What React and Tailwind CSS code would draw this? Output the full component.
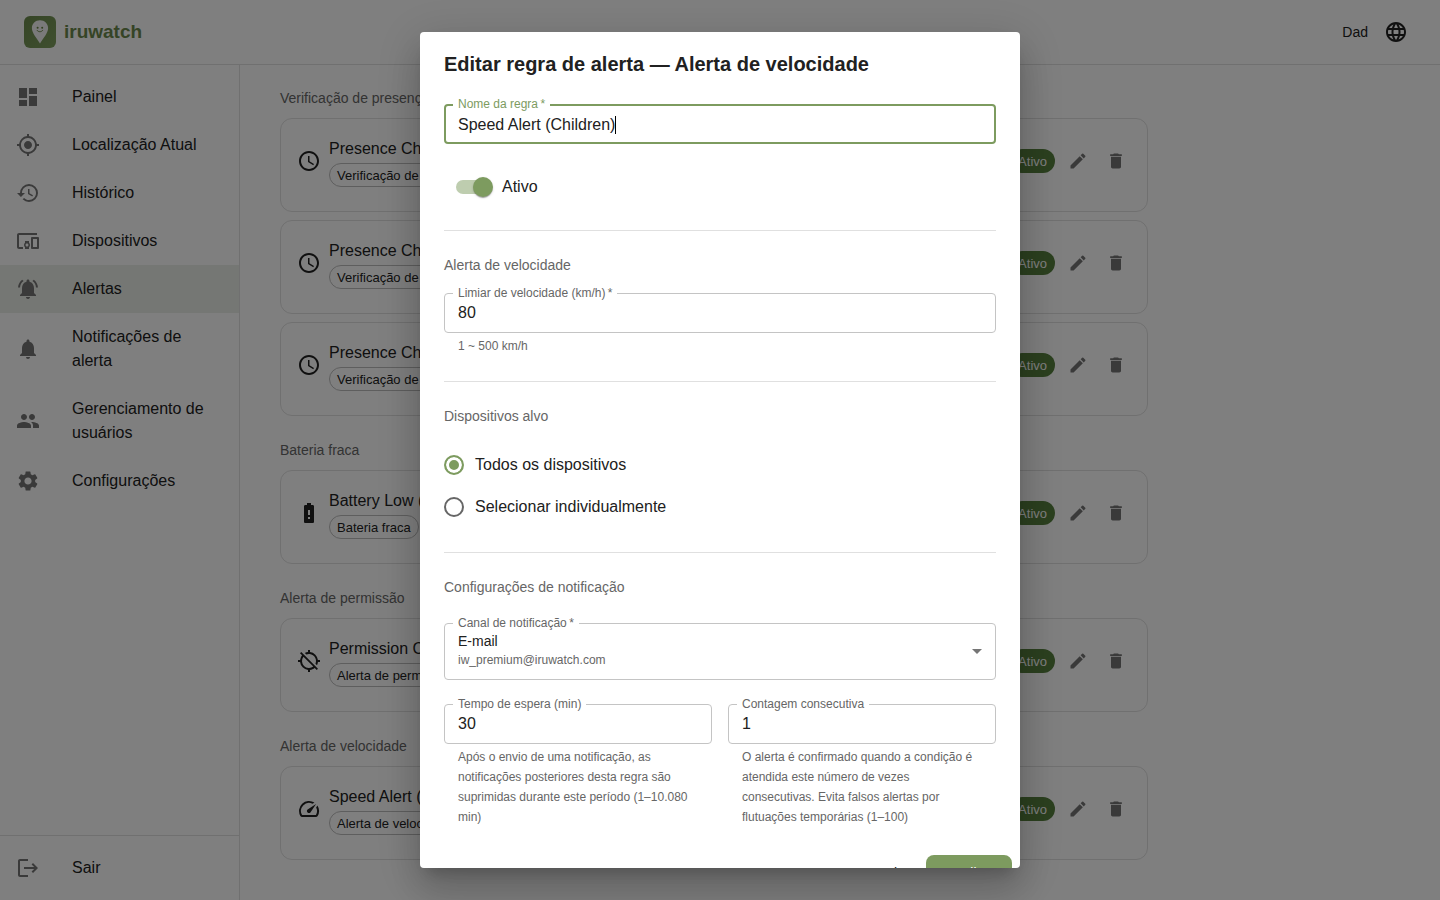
import { useState } from "react";
import {
	MdAccessTime,
	MdArrowDropDown,
	MdBatteryAlert,
	MdDashboard,
	MdDelete,
	MdDevicesOther,
	MdEdit,
	MdHistory,
	MdLanguage,
	MdLocationDisabled,
	MdLogout,
	MdMyLocation,
	MdNotifications,
	MdNotificationsActive,
	MdPeople,
	MdSettings,
	MdSpeed,
} from "react-icons/md";

const navItems = [
	{ label: "Painel", icon: MdDashboard },
	{ label: "Localização Atual", icon: MdMyLocation },
	{ label: "Histórico", icon: MdHistory },
	{ label: "Dispositivos", icon: MdDevicesOther },
	{ label: "Alertas", icon: MdNotificationsActive, active: true },
	{ label: "Notificações de alerta", icon: MdNotifications },
	{ label: "Gerenciamento de usuários", icon: MdPeople },
	{ label: "Configurações", icon: MdSettings },
];

const ruleGroups = [
	{
		title: "Verificação de presença",
		icon: MdAccessTime,
		rules: ["Presence Check (Children)", "Presence Check (Parents)", "Presence Check (Family)"],
	},
	{ title: "Bateria fraca", icon: MdBatteryAlert, rules: ["Battery Low (Children)"] },
	{ title: "Alerta de permissão", icon: MdLocationDisabled, rules: ["Permission Change"] },
	{ title: "Alerta de velocidade", icon: MdSpeed, rules: ["Speed Alert (Children)"] },
];

function Logo() {
	return (
		<a href="#" className="flex items-center gap-2">
			<svg width="32" height="32" viewBox="0 0 32 32" aria-hidden="true">
				<defs>
					<linearGradient id="logo-bg" x1="0" y1="0" x2="1" y2="1">
						<stop offset="0" stopColor="#6b8a4c" />
						<stop offset="1" stopColor="#7f9f5f" />
					</linearGradient>
				</defs>
				<rect width="32" height="32" rx="6" fill="url(#logo-bg)" />
				<path d="M16 4.2c-4.6 0-8.1 3.4-8.1 7.9 0 5.2 4.9 10.2 8.1 15.3 3.2-5.1 8.1-10.1 8.1-15.3 0-4.5-3.5-7.9-8.1-7.9z" fill="#f5f5f5" />
				<circle cx="13.6" cy="11.7" r="1" fill="#64803f" />
				<circle cx="18.2" cy="11.7" r="1" fill="#64803f" />
				<path d="M13 14.3c1.4 2 4.4 2 5.8 0" fill="none" stroke="#64803f" strokeWidth="0.9" strokeLinecap="round" />
			</svg>
			<span className="text-[19px] font-bold text-[#6b884c]">iruwatch</span>
		</a>
	);
}

function NavItem({ label, icon: Icon, active }) {
	return (
		<a
			href="#"
			aria-current={active ? "page" : undefined}
			className={`flex items-center gap-8 px-4 py-3 ${active ? "bg-[#ebeee8]" : ""}`}
		>
			<Icon size={24} className="shrink-0 text-[#757575]" />
			<span>{label}</span>
		</a>
	);
}

function RuleCard({ name, type, icon: Icon }) {
	return (
		<li className="flex items-center gap-2 rounded-xl border border-[#e0e0e0] px-4 pt-4 pb-6">
			<Icon size={24} className="shrink-0" />
			<div className="flex flex-1 flex-col items-start">
				<span className="leading-7">{name}</span>
				<span className="flex h-6 items-center rounded-full border border-[#bdbdbd] px-[7px] pt-0.5 text-[13px]">{type}</span>
			</div>
			<span className="flex h-6 items-center rounded-full bg-[#57803e] px-2 pt-0.5 text-[13px] text-white">Ativo</span>
			<button type="button" aria-label="Editar" className="p-[5px] text-[#757575]">
				<MdEdit size={20} />
			</button>
			<button type="button" aria-label="Excluir" className="p-[5px] text-[#757575]">
				<MdDelete size={20} />
			</button>
		</li>
	);
}

function FieldLabel({ id, required, focused, children }) {
	return (
		<label
			htmlFor={id}
			className={`absolute -top-2 left-[9px] bg-white px-[5px] text-xs leading-4 ${focused ? "text-[#7d9b5f]" : "text-[#666666]"}`}
		>
			{children}
			{required && <span aria-hidden="true">&thinsp;*</span>}
		</label>
	);
}

function TextField({ id, label, value, onChange, required, focused, helper }) {
	return (
		<div>
			<div className="relative">
				<input
					id={id}
					value={value}
					onChange={(e) => onChange(e.target.value)}
					required={required}
					aria-describedby={helper ? `${id}-helper` : undefined}
					className={`block h-10 w-full rounded outline-none ${
						focused ? "border-2 border-[#7d9b5f] px-3 pt-0.5" : "border border-[#c4c4c4] px-[13px]"
					}`}
				/>
				<FieldLabel id={id} required={required} focused={focused}>
					{label}
				</FieldLabel>
				{focused && <span className="absolute top-3 left-[171px] h-[18px] w-px bg-black" />}
			</div>
			{helper && (
				<p id={`${id}-helper`} className="mx-[14px] mt-[3px] mb-px text-xs leading-5 text-[#666666]">
					{helper}
				</p>
			)}
		</div>
	);
}

function Radio({ label, checked, onChange }) {
	return (
		<label className="flex h-[42px] items-center gap-[11px]">
			<input
				type="radio"
				name="target"
				checked={checked}
				onChange={onChange}
				className="size-5 appearance-none rounded-full border-2 border-[#666666] checked:border-[#7d9b5f] checked:bg-[#7d9b5f] checked:shadow-[inset_0_0_0_3px_#ffffff]"
			/>
			{label}
		</label>
	);
}

function SectionTitle({ children }) {
	return <h3 className="pb-0.5 text-sm leading-5 text-[#666666]">{children}</h3>;
}

function EditRuleDialog() {
	const [name, setName] = useState("Speed Alert (Children)");
	const [enabled, setEnabled] = useState(true);
	const [limit, setLimit] = useState("80");
	const [target, setTarget] = useState("all");
	const [cooldown, setCooldown] = useState("30");
	const [count, setCount] = useState("1");

	return (
		<div className="fixed inset-0 flex items-center justify-center bg-black/50 p-8">
			<form
				role="dialog"
				aria-modal="true"
				aria-labelledby="dialog-title"
				onSubmit={(e) => e.preventDefault()}
				className="max-h-full w-full max-w-[600px] overflow-y-auto rounded bg-white shadow-[0_11px_15px_-7px_rgba(0,0,0,0.2),0_24px_38px_3px_rgba(0,0,0,0.14),0_9px_46px_8px_rgba(0,0,0,0.12)] [scrollbar-width:none]"
			>
				<h2 id="dialog-title" className="px-6 py-4 text-xl leading-8 font-bold">
					Editar regra de alerta — Alerta de velocidade
				</h2>

				<div className="flex flex-col gap-6 px-6 pt-2 pb-[19px]">
					<TextField id="name" label="Nome da regra" value={name} onChange={setName} required focused />

					<label className="flex h-[38px] items-center self-start">
						<span className="relative mx-3 flex h-5 w-[34px] items-center">
							<input
								type="checkbox"
								role="switch"
								checked={enabled}
								onChange={(e) => setEnabled(e.target.checked)}
								className="peer h-[14px] w-full appearance-none rounded-full bg-[#9e9e9e] checked:bg-[#becdaf]"
							/>
							<span className="pointer-events-none absolute -left-[3px] size-5 rounded-full bg-white shadow-[0_2px_1px_-1px_rgba(0,0,0,0.2),0_1px_1px_0_rgba(0,0,0,0.14),0_1px_3px_0_rgba(0,0,0,0.12)] peer-checked:left-[17px] peer-checked:bg-[#7d9b5f]" />
						</span>
						Ativo
					</label>

					<hr className="border-[#e0e0e0]" />

					<section className="flex flex-col gap-4">
						<SectionTitle>Alerta de velocidade</SectionTitle>
						<TextField
							id="limit"
							label="Limiar de velocidade (km/h)"
							value={limit}
							onChange={setLimit}
							required
							helper="1 ~ 500 km/h"
						/>
					</section>

					<hr className="border-[#e0e0e0]" />

					<section className="flex flex-col gap-4">
						<SectionTitle>Dispositivos alvo</SectionTitle>
						<div className="flex flex-col items-start">
							<Radio label="Todos os dispositivos" checked={target === "all"} onChange={() => setTarget("all")} />
							<Radio label="Selecionar individualmente" checked={target === "some"} onChange={() => setTarget("some")} />
						</div>
					</section>

					<hr className="border-[#e0e0e0]" />

					<section className="flex flex-col gap-6">
						<SectionTitle>Configurações de notificação</SectionTitle>
						<div className="relative">
							<select
								id="channel"
								required
								className="block h-[57px] w-full appearance-none rounded border border-[#c4c4c4] px-[13px] pt-[7px] pb-[29px] text-sm outline-none"
							>
								<option>E-mail</option>
							</select>
							<FieldLabel id="channel" required>
								Canal de notificação
							</FieldLabel>
							<span className="pointer-events-none absolute bottom-2.5 left-[14px] text-xs leading-5 text-[#666666]">
								iw_premium@iruwatch.com
							</span>
							<div className="pointer-events-none absolute inset-y-0 right-[7px] flex items-center pb-0.5 text-[#757575]">
								<MdArrowDropDown size={24} />
							</div>
						</div>

						<div className="grid grid-cols-2 gap-4">
							<TextField
								id="cooldown"
								label="Tempo de espera (min)"
								value={cooldown}
								onChange={setCooldown}
								helper="Após o envio de uma notificação, as notificações posteriores desta regra são suprimidas durante este período (1–10.080 min)"
							/>
							<TextField
								id="count"
								label="Contagem consecutiva"
								value={count}
								onChange={setCount}
								helper="O alerta é confirmado quando a condição é atendida este número de vezes consecutivas. Evita falsos alertas por flutuações temporárias (1–100)"
							/>
						</div>
					</section>
				</div>

				<div className="flex justify-end gap-2 p-2 text-sm leading-6">
					<button type="button" className="rounded-lg px-2 py-1.5">
						Cancelar
					</button>
					<button type="submit" className="rounded-lg bg-[#7d9b5f] px-4 py-1.5 text-white">
						Atualizar
					</button>
				</div>
			</form>
		</div>
	);
}

export default function App() {
	return (
		<div className="flex min-h-screen flex-col bg-white font-['Liberation_Sans',Arial,sans-serif] text-base text-[#212121]">
			<header className="flex h-[65px] items-center justify-between border-b border-[#e0e0e0] px-6">
				<Logo />
				<div className="flex items-center gap-2">
					<span className="text-sm">Dad</span>
					<button type="button" aria-label="Idioma" className="p-2">
						<MdLanguage size={24} />
					</button>
				</div>
			</header>

			<div className="flex flex-1">
				<aside className="flex w-60 shrink-0 flex-col justify-between border-r border-[#e0e0e0]">
					<nav className="py-2">
						{navItems.map((item) => (
							<NavItem key={item.label} {...item} />
						))}
					</nav>
					<div className="border-t border-[#e0e0e0] py-2">
						<NavItem label="Sair" icon={MdLogout} />
					</div>
				</aside>

				<main className="flex-1 px-6 pt-[23px]">
					<div className="flex max-w-[900px] flex-col gap-6 px-4">
						{ruleGroups.map((group) => (
							<section key={group.title}>
								<h2 className="mb-2 pb-0.5 text-sm leading-5 text-[#666666]">{group.title}</h2>
								<ul className="flex flex-col gap-2">
									{group.rules.map((rule) => (
										<RuleCard key={rule} name={rule} type={group.title} icon={group.icon} />
									))}
								</ul>
							</section>
						))}
					</div>
				</main>
			</div>

			<EditRuleDialog />
		</div>
	);
}
